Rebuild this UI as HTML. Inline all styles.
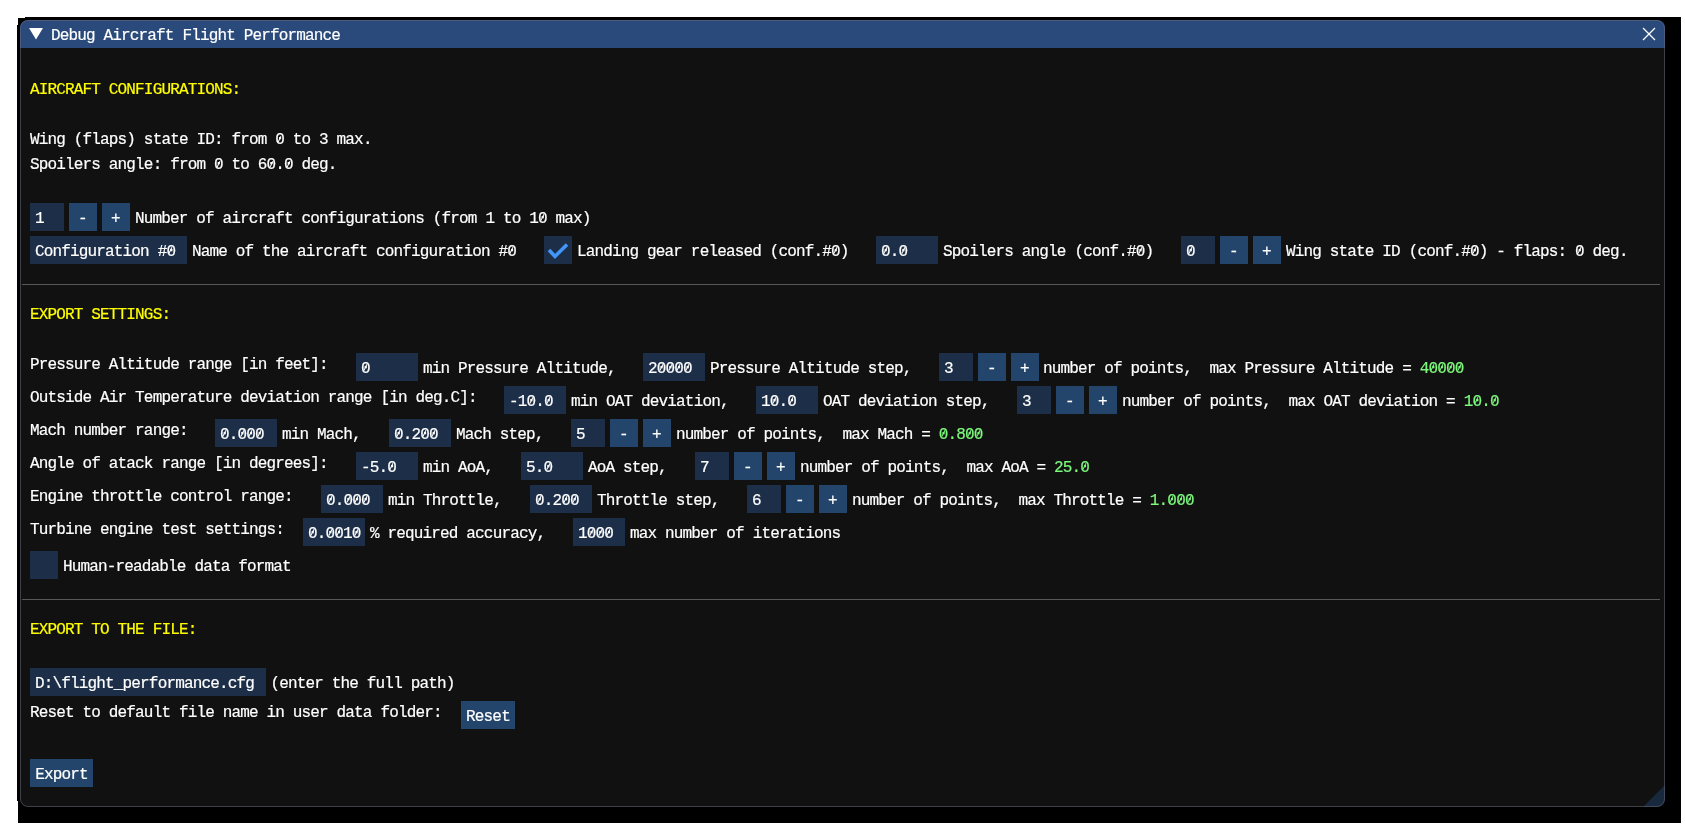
<!DOCTYPE html>
<html><head><meta charset="utf-8"><style>
html,body{margin:0;padding:0;background:#ffffff;width:1685px;height:827px;overflow:hidden;}
#shadow{position:absolute;left:17px;top:17px;width:1664px;height:806px;background:#000;}
#win{position:absolute;left:20px;top:20px;width:1645px;height:787px;background:rgb(17,17,17);border-radius:8px;overflow:hidden;}
#bord{position:absolute;left:20px;top:20px;width:1643px;height:785px;border:1px solid rgba(110,110,128,0.5);border-radius:8px;}
#title{position:absolute;left:0;top:0;width:1645px;height:28px;background:rgb(41,74,122);}
#c div{position:absolute;}
#c,.tt{will-change:transform;}
.z{position:relative;}
.z::after{content:'';position:absolute;left:4.0px;top:4.8px;width:1.4px;height:6.6px;background:currentColor;transform:rotate(26deg);}
.t{position:absolute;font-family:"Liberation Mono",monospace;font-size:16px;line-height:18.125px;white-space:pre;color:#fff;letter-spacing:-0.842px;-webkit-text-stroke:0.2px currentColor;}
</style></head><body>
<div id="shadow"></div><div style="position:absolute;left:17px;top:17px;width:8px;height:1px;background:#fff"></div><div style="position:absolute;left:17px;top:17px;width:1px;height:8px;background:#fff"></div><div style="position:absolute;left:17px;top:801px;width:1px;height:22px;background:#fff"></div>
<div id="win"><div id="title"></div>
<svg style="position:absolute;right:0;bottom:0" width="22" height="22"><polygon points="22,0 22,22 0,22" fill="rgb(24,41,61)"/></svg>
</div>
<svg style="position:absolute;left:0;top:0" width="1685" height="60">
<polygon points="29,28 43,28 36,39.5" fill="#fff"/>
<line x1="1643" y1="28" x2="1655" y2="40" stroke="#fff" stroke-width="1.2"/>
<line x1="1655" y1="28" x2="1643" y2="40" stroke="#fff" stroke-width="1.2"/>
</svg>
<div class="t" style="will-change:transform;left:51px;top:26.58px">Debug Aircraft Flight Performance</div>
<div id="c">
<div class="t" style="left:30px;top:81.08px;color:#ffff00">AIRCRAFT CONFIGURATIONS:</div>
<div class="t" style="left:30px;top:131.48px;color:#ffffff">Wing (flaps) state ID: from <span class="z">0</span> to 3 max.</div>
<div class="t" style="left:30px;top:155.88px;color:#ffffff">Spoilers angle: from <span class="z">0</span> to 6<span class="z">0</span>.<span class="z">0</span> deg.</div>
<div style="left:30px;top:203px;width:34px;height:28px;background:rgb(29,46,72);"></div>
<div class="t" style="left:35px;top:209.68px;color:#ffffff">1</div>
<div style="left:69px;top:203px;width:28px;height:28px;background:rgb(35,69,108);"></div>
<div class="t" style="left:77.92px;top:209.68px;color:#ffffff">-</div>
<div style="left:102px;top:203px;width:28px;height:28px;background:rgb(35,69,108);"></div>
<div class="t" style="left:110.92px;top:209.68px;color:#ffffff">+</div>
<div class="t" style="left:135px;top:209.68px;color:#ffffff">Number of aircraft configurations (from 1 to 1<span class="z">0</span> max)</div>
<div style="left:30px;top:236px;width:157px;height:28px;background:rgb(29,46,72);"></div>
<div class="t" style="left:35px;top:242.68px;color:#ffffff">Configuration #<span class="z">0</span></div>
<div class="t" style="left:192px;top:242.68px;color:#ffffff">Name of the aircraft configuration #<span class="z">0</span></div>
<div style="left:544px;top:236px;width:28px;height:28px;background:rgb(29,46,72);"></div>
<svg style="position:absolute;left:544px;top:236px" width="28" height="28"><polyline points="5,14 11,20.5 23,8.5" fill="none" stroke="rgb(66,150,250)" stroke-width="3.6" stroke-linejoin="miter" stroke-linecap="butt"/></svg>
<div class="t" style="left:577px;top:242.68px;color:#ffffff">Landing gear released (conf.#<span class="z">0</span>)</div>
<div style="left:876px;top:236px;width:62px;height:28px;background:rgb(29,46,72);"></div>
<div class="t" style="left:881px;top:242.68px;color:#ffffff"><span class="z">0</span>.<span class="z">0</span></div>
<div class="t" style="left:943px;top:242.68px;color:#ffffff">Spoilers angle (conf.#<span class="z">0</span>)</div>
<div style="left:1181px;top:236px;width:34px;height:28px;background:rgb(29,46,72);"></div>
<div class="t" style="left:1186px;top:242.68px;color:#ffffff"><span class="z">0</span></div>
<div style="left:1220px;top:236px;width:28px;height:28px;background:rgb(35,69,108);"></div>
<div class="t" style="left:1228.9199999999998px;top:242.68px;color:#ffffff">-</div>
<div style="left:1253px;top:236px;width:28px;height:28px;background:rgb(35,69,108);"></div>
<div class="t" style="left:1261.9199999999998px;top:242.68px;color:#ffffff">+</div>
<div class="t" style="left:1286px;top:242.68px;color:#ffffff">Wing state ID (conf.#<span class="z">0</span>) - flaps: <span class="z">0</span> deg.</div>
<div style="left:22px;top:284px;width:1638px;height:1px;background:rgb(88,88,88);"></div>
<div class="t" style="left:30px;top:306.38px;color:#ffff00">EXPORT SETTINGS:</div>
<div class="t" style="left:30px;top:356.08px;color:#ffffff">Pressure Altitude range [in feet]:</div>
<div style="left:356px;top:353px;width:62px;height:28px;background:rgb(29,46,72);"></div>
<div class="t" style="left:361px;top:359.68px;color:#ffffff"><span class="z">0</span></div>
<div class="t" style="left:423px;top:359.68px;color:#ffffff">min Pressure Altitude,</div>
<div style="left:643px;top:353px;width:62px;height:28px;background:rgb(29,46,72);"></div>
<div class="t" style="left:648px;top:359.68px;color:#ffffff">2<span class="z">0</span><span class="z">0</span><span class="z">0</span><span class="z">0</span></div>
<div class="t" style="left:710px;top:359.68px;color:#ffffff">Pressure Altitude step,</div>
<div style="left:939px;top:353px;width:34px;height:28px;background:rgb(29,46,72);"></div>
<div class="t" style="left:944px;top:359.68px;color:#ffffff">3</div>
<div style="left:978px;top:353px;width:28px;height:28px;background:rgb(35,69,108);"></div>
<div class="t" style="left:986.92px;top:359.68px;color:#ffffff">-</div>
<div style="left:1011px;top:353px;width:28px;height:28px;background:rgb(35,69,108);"></div>
<div class="t" style="left:1019.92px;top:359.68px;color:#ffffff">+</div>
<div class="t" style="left:1043px;top:359.68px"><span style="color:#ffffff">number of points,  max Pressure Altitude = </span><span style="color:#7cfa7c">4<span class="z">0</span><span class="z">0</span><span class="z">0</span><span class="z">0</span></span></div>
<div class="t" style="left:30px;top:389.08px;color:#ffffff">Outside Air Temperature deviation range [in deg.C]:</div>
<div style="left:504px;top:386px;width:62px;height:28px;background:rgb(29,46,72);"></div>
<div class="t" style="left:509px;top:392.68px;color:#ffffff">-1<span class="z">0</span>.<span class="z">0</span></div>
<div class="t" style="left:571px;top:392.68px;color:#ffffff">min OAT deviation,</div>
<div style="left:756px;top:386px;width:62px;height:28px;background:rgb(29,46,72);"></div>
<div class="t" style="left:761px;top:392.68px;color:#ffffff">1<span class="z">0</span>.<span class="z">0</span></div>
<div class="t" style="left:823px;top:392.68px;color:#ffffff">OAT deviation step,</div>
<div style="left:1017px;top:386px;width:34px;height:28px;background:rgb(29,46,72);"></div>
<div class="t" style="left:1022px;top:392.68px;color:#ffffff">3</div>
<div style="left:1056px;top:386px;width:28px;height:28px;background:rgb(35,69,108);"></div>
<div class="t" style="left:1064.9199999999998px;top:392.68px;color:#ffffff">-</div>
<div style="left:1089px;top:386px;width:28px;height:28px;background:rgb(35,69,108);"></div>
<div class="t" style="left:1097.9199999999998px;top:392.68px;color:#ffffff">+</div>
<div class="t" style="left:1122px;top:392.68px"><span style="color:#ffffff">number of points,  max OAT deviation = </span><span style="color:#7cfa7c">1<span class="z">0</span>.<span class="z">0</span></span></div>
<div class="t" style="left:30px;top:422.08px;color:#ffffff">Mach number range:</div>
<div style="left:215px;top:419px;width:62px;height:28px;background:rgb(29,46,72);"></div>
<div class="t" style="left:220px;top:425.68px;color:#ffffff"><span class="z">0</span>.<span class="z">0</span><span class="z">0</span><span class="z">0</span></div>
<div class="t" style="left:282px;top:425.68px;color:#ffffff">min Mach,</div>
<div style="left:389px;top:419px;width:62px;height:28px;background:rgb(29,46,72);"></div>
<div class="t" style="left:394px;top:425.68px;color:#ffffff"><span class="z">0</span>.2<span class="z">0</span><span class="z">0</span></div>
<div class="t" style="left:456px;top:425.68px;color:#ffffff">Mach step,</div>
<div style="left:571px;top:419px;width:34px;height:28px;background:rgb(29,46,72);"></div>
<div class="t" style="left:576px;top:425.68px;color:#ffffff">5</div>
<div style="left:610px;top:419px;width:28px;height:28px;background:rgb(35,69,108);"></div>
<div class="t" style="left:618.92px;top:425.68px;color:#ffffff">-</div>
<div style="left:643px;top:419px;width:28px;height:28px;background:rgb(35,69,108);"></div>
<div class="t" style="left:651.92px;top:425.68px;color:#ffffff">+</div>
<div class="t" style="left:676px;top:425.68px"><span style="color:#ffffff">number of points,  max Mach = </span><span style="color:#7cfa7c"><span class="z">0</span>.8<span class="z">0</span><span class="z">0</span></span></div>
<div class="t" style="left:30px;top:455.08px;color:#ffffff">Angle of atack range [in degrees]:</div>
<div style="left:356px;top:452px;width:62px;height:28px;background:rgb(29,46,72);"></div>
<div class="t" style="left:361px;top:458.68px;color:#ffffff">-5.<span class="z">0</span></div>
<div class="t" style="left:423px;top:458.68px;color:#ffffff">min AoA,</div>
<div style="left:521px;top:452px;width:62px;height:28px;background:rgb(29,46,72);"></div>
<div class="t" style="left:526px;top:458.68px;color:#ffffff">5.<span class="z">0</span></div>
<div class="t" style="left:588px;top:458.68px;color:#ffffff">AoA step,</div>
<div style="left:695px;top:452px;width:34px;height:28px;background:rgb(29,46,72);"></div>
<div class="t" style="left:700px;top:458.68px;color:#ffffff">7</div>
<div style="left:734px;top:452px;width:28px;height:28px;background:rgb(35,69,108);"></div>
<div class="t" style="left:742.92px;top:458.68px;color:#ffffff">-</div>
<div style="left:767px;top:452px;width:28px;height:28px;background:rgb(35,69,108);"></div>
<div class="t" style="left:775.92px;top:458.68px;color:#ffffff">+</div>
<div class="t" style="left:800px;top:458.68px"><span style="color:#ffffff">number of points,  max AoA = </span><span style="color:#7cfa7c">25.<span class="z">0</span></span></div>
<div class="t" style="left:30px;top:488.08px;color:#ffffff">Engine throttle control range:</div>
<div style="left:321px;top:485px;width:62px;height:28px;background:rgb(29,46,72);"></div>
<div class="t" style="left:326px;top:491.68px;color:#ffffff"><span class="z">0</span>.<span class="z">0</span><span class="z">0</span><span class="z">0</span></div>
<div class="t" style="left:388px;top:491.68px;color:#ffffff">min Throttle,</div>
<div style="left:530px;top:485px;width:62px;height:28px;background:rgb(29,46,72);"></div>
<div class="t" style="left:535px;top:491.68px;color:#ffffff"><span class="z">0</span>.2<span class="z">0</span><span class="z">0</span></div>
<div class="t" style="left:597px;top:491.68px;color:#ffffff">Throttle step,</div>
<div style="left:747px;top:485px;width:34px;height:28px;background:rgb(29,46,72);"></div>
<div class="t" style="left:752px;top:491.68px;color:#ffffff">6</div>
<div style="left:786px;top:485px;width:28px;height:28px;background:rgb(35,69,108);"></div>
<div class="t" style="left:794.92px;top:491.68px;color:#ffffff">-</div>
<div style="left:819px;top:485px;width:28px;height:28px;background:rgb(35,69,108);"></div>
<div class="t" style="left:827.92px;top:491.68px;color:#ffffff">+</div>
<div class="t" style="left:852px;top:491.68px"><span style="color:#ffffff">number of points,  max Throttle = </span><span style="color:#7cfa7c">1.<span class="z">0</span><span class="z">0</span><span class="z">0</span></span></div>
<div class="t" style="left:30px;top:521.08px;color:#ffffff">Turbine engine test settings:</div>
<div style="left:303px;top:518px;width:62px;height:28px;background:rgb(29,46,72);"></div>
<div class="t" style="left:308px;top:524.68px;color:#ffffff"><span class="z">0</span>.<span class="z">0</span><span class="z">0</span>1<span class="z">0</span></div>
<div class="t" style="left:370px;top:524.68px;color:#ffffff">% required accuracy,</div>
<div style="left:573px;top:518px;width:52px;height:28px;background:rgb(29,46,72);"></div>
<div class="t" style="left:578px;top:524.68px;color:#ffffff">1<span class="z">0</span><span class="z">0</span><span class="z">0</span></div>
<div class="t" style="left:630px;top:524.68px;color:#ffffff">max number of iterations</div>
<div style="left:30px;top:551px;width:28px;height:28px;background:rgb(29,46,72);"></div>
<div class="t" style="left:63px;top:557.68px;color:#ffffff">Human-readable data format</div>
<div style="left:22px;top:599px;width:1638px;height:1px;background:rgb(88,88,88);"></div>
<div class="t" style="left:30px;top:621.48px;color:#ffff00">EXPORT TO THE FILE:</div>
<div style="left:30px;top:668px;width:236px;height:28px;background:rgb(29,46,72);"></div>
<div class="t" style="left:35px;top:674.68px;color:#ffffff">D:\flight_performance.cfg</div>
<div class="t" style="left:270.5px;top:674.68px;color:#ffffff">(enter the full path)</div>
<div class="t" style="left:30px;top:704.08px;color:#ffffff">Reset to default file name in user data folder:</div>
<div style="left:461px;top:701px;width:54px;height:28px;background:rgb(35,69,108);"></div>
<div class="t" style="left:466.1px;top:707.68px;color:#ffffff">Reset</div>
<div style="left:30px;top:759px;width:63px;height:28px;background:rgb(35,69,108);"></div>
<div class="t" style="left:35.22px;top:765.68px;color:#ffffff">Export</div>
</div>
<div id="bord"></div>
</body></html>
